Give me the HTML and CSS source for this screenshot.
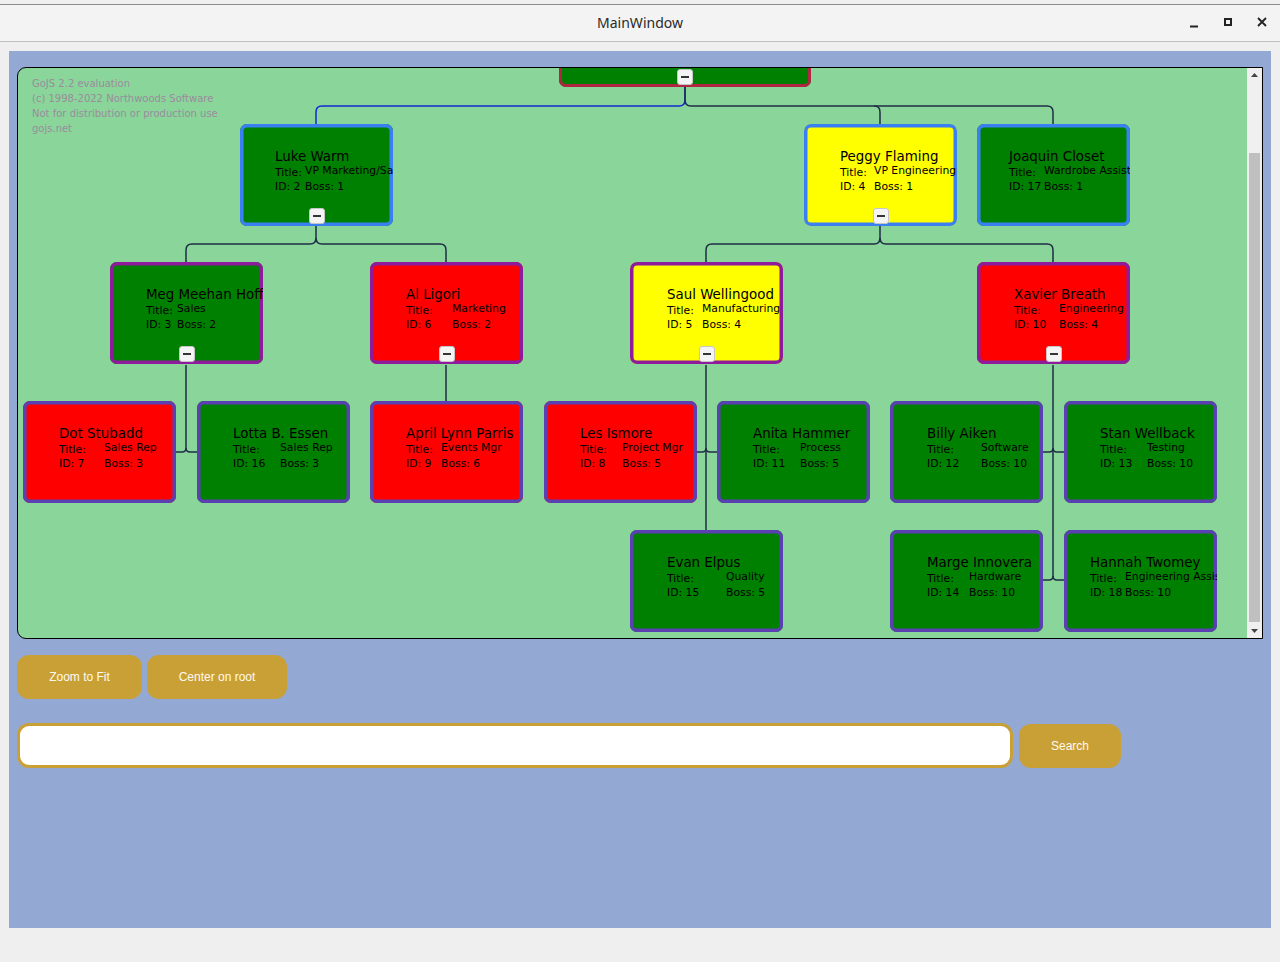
FILE: index.html
```html
<!DOCTYPE html>
<html>
<head>
<meta charset="utf-8">
<title>MainWindow</title>
<link rel="stylesheet" href="styles.css">
</head>
<body>
<div class="titlebar">
  <span class="title">MainWindow</span>
  <div class="controls">
    <svg class="ctl" width="14" height="14" viewBox="0 0 14 14"><path d="M3 11.5 H11" stroke="#222" stroke-width="2"/></svg>
    <svg class="ctl" width="14" height="14" viewBox="0 0 14 14"><rect x="4" y="4" width="6" height="6" fill="none" stroke="#222" stroke-width="2"/></svg>
    <svg class="ctl" width="14" height="14" viewBox="0 0 14 14"><path d="M3 3 L11 11 M11 3 L3 11" stroke="#222" stroke-width="1.8"/></svg>
  </div>
</div>

<div class="panel">
  <div class="canvas">
    <div class="diagram">
      <svg class="links" width="1229" height="570" viewBox="18 68 1229 570">
        <path class="lk blue" d="M685 87 V100 Q685 106 679 106 H322 Q316 106 316 112 V124"/>
        <path class="lk" d="M685 87 V100 Q685 106 691 106 H874 Q880 106 880 112 V124"/>
        <path class="lk" d="M874 106 H1047 Q1053 106 1053 112 V124"/>
        <path class="lk" d="M316 226 V238 Q316 244 310 244 H192 Q186 244 186 250 V262"/>
        <path class="lk" d="M316 238 Q316 244 322 244 H440 Q446 244 446 250 V262"/>
        <path class="lk" d="M880 226 V238 Q880 244 874 244 H712 Q706 244 706 250 V262"/>
        <path class="lk" d="M880 238 Q880 244 886 244 H1047 Q1053 244 1053 250 V262"/>
        <path class="lk" d="M186 365 V448 Q186 452 182 452 H176"/>
        <path class="lk" d="M186 448 Q186 452 190 452 H197"/>
        <path class="lk" d="M446 365 V401"/>
        <path class="lk" d="M706 365 V530"/>
        <path class="lk" d="M696 452 H702 Q706 452 706 448"/>
        <path class="lk" d="M717 452 H710 Q706 452 706 448"/>
        <path class="lk" d="M1053 365 V576 Q1053 580 1049 580 H1043"/>
        <path class="lk" d="M1053 576 Q1053 580 1057 580 H1064"/>
        <path class="lk" d="M1043 452 H1049 Q1053 452 1053 448"/>
        <path class="lk" d="M1064 452 H1057 Q1053 452 1053 448"/>
      </svg>

      <div class="watermark">
        <div>GoJS 2.2 evaluation</div>
        <div>(c) 1998-2022 Northwoods Software</div>
        <div>Not for distribution or production use</div>
        <div>gojs.net</div>
      </div>

      <div class="node root green b-root" style="left:541px;top:-40px;width:252px;height:59px">
        <span class="exp"><i></i></span>
      </div>

      <div class="node green b-l1" style="left:222px;top:56px;--pl:35px;--c2:30px">
        <div class="name">Luke Warm</div>
        <div class="details"><span>Title:</span><span class="val">VP Marketing/Sales</span><span>ID: 2</span><span>Boss: 1</span></div>
        <span class="exp"><i></i></span>
      </div>
      <div class="node yellow b-l1" style="left:786px;top:56px;--pl:36px;--c2:34px">
        <div class="name">Peggy Flaming</div>
        <div class="details"><span>Title:</span><span class="val">VP Engineering</span><span>ID: 4</span><span>Boss: 1</span></div>
        <span class="exp"><i></i></span>
      </div>
      <div class="node green b-l1" style="left:959px;top:56px;--pl:32px;--c2:35px">
        <div class="name">Joaquin Closet</div>
        <div class="details"><span>Title:</span><span class="val">Wardrobe Assistant</span><span>ID: 17</span><span>Boss: 1</span></div>
      </div>

      <div class="node green b-l2" style="left:92px;top:194px;--pl:36px;--c2:31px">
        <div class="name">Meg Meehan Hoffa</div>
        <div class="details"><span>Title:</span><span class="val">Sales</span><span>ID: 3</span><span>Boss: 2</span></div>
        <span class="exp"><i></i></span>
      </div>
      <div class="node red b-l2" style="left:352px;top:194px;--pl:36px;--c2:46px">
        <div class="name">Al Ligori</div>
        <div class="details"><span>Title:</span><span class="val">Marketing</span><span>ID: 6</span><span>Boss: 2</span></div>
        <span class="exp"><i></i></span>
      </div>
      <div class="node yellow b-l2" style="left:612px;top:194px;--pl:37px;--c2:35px">
        <div class="name">Saul Wellingood</div>
        <div class="details"><span>Title:</span><span class="val">Manufacturing</span><span>ID: 5</span><span>Boss: 4</span></div>
        <span class="exp"><i></i></span>
      </div>
      <div class="node red b-l2" style="left:959px;top:194px;--pl:37px;--c2:45px">
        <div class="name">Xavier Breath</div>
        <div class="details"><span>Title:</span><span class="val">Engineering</span><span>ID: 10</span><span>Boss: 4</span></div>
        <span class="exp"><i></i></span>
      </div>

      <div class="node red b-l3" style="left:5px;top:333px;--pl:36px;--c2:45px">
        <div class="name">Dot Stubadd</div>
        <div class="details"><span>Title:</span><span class="val">Sales Rep</span><span>ID: 7</span><span>Boss: 3</span></div>
      </div>
      <div class="node green b-l3" style="left:179px;top:333px;--pl:36px;--c2:47px">
        <div class="name">Lotta B. Essen</div>
        <div class="details"><span>Title:</span><span class="val">Sales Rep</span><span>ID: 16</span><span>Boss: 3</span></div>
      </div>
      <div class="node red b-l3" style="left:352px;top:333px;--pl:36px;--c2:35px">
        <div class="name">April Lynn Parris</div>
        <div class="details"><span>Title:</span><span class="val">Events Mgr</span><span>ID: 9</span><span>Boss: 6</span></div>
      </div>
      <div class="node red b-l3" style="left:526px;top:333px;--pl:36px;--c2:42px">
        <div class="name">Les Ismore</div>
        <div class="details"><span>Title:</span><span class="val">Project Mgr</span><span>ID: 8</span><span>Boss: 5</span></div>
      </div>
      <div class="node green b-l3" style="left:699px;top:333px;--pl:36px;--c2:47px">
        <div class="name">Anita Hammer</div>
        <div class="details"><span>Title:</span><span class="val">Process</span><span>ID: 11</span><span>Boss: 5</span></div>
      </div>
      <div class="node green b-l3" style="left:872px;top:333px;--pl:37px;--c2:54px">
        <div class="name">Billy Aiken</div>
        <div class="details"><span>Title:</span><span class="val">Software</span><span>ID: 12</span><span>Boss: 10</span></div>
      </div>
      <div class="node green b-l3" style="left:1046px;top:333px;--pl:36px;--c2:47px">
        <div class="name">Stan Wellback</div>
        <div class="details"><span>Title:</span><span class="val">Testing</span><span>ID: 13</span><span>Boss: 10</span></div>
      </div>

      <div class="node green b-l3" style="left:612px;top:462px;--pl:37px;--c2:59px">
        <div class="name">Evan Elpus</div>
        <div class="details"><span>Title:</span><span class="val">Quality</span><span>ID: 15</span><span>Boss: 5</span></div>
      </div>
      <div class="node green b-l3" style="left:872px;top:462px;--pl:37px;--c2:42px">
        <div class="name">Marge Innovera</div>
        <div class="details"><span>Title:</span><span class="val">Hardware</span><span>ID: 14</span><span>Boss: 10</span></div>
      </div>
      <div class="node green b-l3" style="left:1046px;top:462px;--pl:26px;--c2:35px">
        <div class="name">Hannah Twomey</div>
        <div class="details"><span>Title:</span><span class="val">Engineering Assistant</span><span>ID: 18</span><span>Boss: 10</span></div>
      </div>
    </div>

    <div class="scrollbar">
      <div class="arrow"><svg width="15" height="15" viewBox="0 0 15 15"><path d="M4 9 L7.5 5 L11 9 Z" fill="#444"/></svg></div>
      <div class="track"><div class="thumb"></div></div>
      <div class="arrow"><svg width="15" height="15" viewBox="0 0 15 15"><path d="M4 6 L7.5 10 L11 6 Z" fill="#444"/></svg></div>
    </div>
  </div>

  <div class="btnrow">
    <button class="btn zoom">Zoom to Fit</button>
    <button class="btn center">Center on root</button>
  </div>

  <div class="searchrow">
    <input class="search" type="text">
    <button class="btn searchbtn">Search</button>
  </div>
</div>
</body>
</html>
```

FILE: styles.css
```css
html, body {
  margin: 0;
  padding: 0;
}
body {
  background: #efefef;
  width: 1280px;
  height: 962px;
  overflow: hidden;
  font-family: "DejaVu Sans", sans-serif;
}

.titlebar {
  margin-top: 4px;
  height: 36px;
  box-sizing: content-box;
  border-top: 1px solid #8c8c8c;
  border-bottom: 1px solid #bebebe;
  background: #f3f3f3;
  display: flex;
  align-items: center;
  justify-content: center;
  position: relative;
}
.title {
  font-family: "Noto Sans", "DejaVu Sans", sans-serif;
  font-size: 14px;
  color: #2a2a2a;
  margin-bottom: 2px;
}
.controls {
  position: absolute;
  right: 11px;
  top: 10px;
  display: flex;
  gap: 20px;
}
.ctl {
  display: block;
}

.panel {
  margin: 9px 9px 0 9px;
  height: 877px;
  box-sizing: border-box;
  background: #93a8d2;
  padding: 16px 8px 0 8px;
}

.canvas {
  height: 572px;
  box-sizing: border-box;
  border: 1px solid #000;
  border-radius: 9px 0 0 9px;
  background: #89d59a;
  display: flex;
  overflow: hidden;
}
.diagram {
  flex: 1;
  position: relative;
  overflow: hidden;
}
.links {
  position: absolute;
  left: 0;
  top: 0;
}
.lk {
  fill: none;
  stroke: #1f2c46;
  stroke-width: 1.5;
}
.lk.blue {
  stroke: #1228d2;
}

.watermark {
  position: absolute;
  left: 14px;
  top: 8px;
  font-size: 10px;
  line-height: 15px;
  color: #9c8c9c;
  white-space: nowrap;
}

.node {
  position: absolute;
  width: 153px;
  height: 102px;
  box-sizing: border-box;
  border-radius: 7px;
  overflow: hidden;
  padding-top: 25px;
  padding-left: var(--pl, 36px);
  color: #000;
  white-space: nowrap;
}
.green { background: #008000; }
.red { background: #ff0000; }
.yellow { background: #ffff00; }
.b-root { box-shadow: inset 0 0 0 3px #b02540; }
.b-l1 { box-shadow: inset 0 0 0 3.5px #3b80f2; }
.b-l2 { box-shadow: inset 0 0 0 3.5px #8e1b9c; }
.b-l3 { box-shadow: inset 0 0 0 3.5px #5a40b2; }

.name {
  font-size: 13.4px;
  line-height: 16px;
}
.details {
  display: grid;
  grid-template-columns: var(--c2, 32px) auto;
  font-size: 10.8px;
  line-height: 14px;
  margin-top: 1px;
}
.details .val {
  margin-top: -2px;
}

.exp {
  position: absolute;
  left: 50%;
  bottom: 2px;
  margin-left: -8px;
  width: 16px;
  height: 16px;
  box-sizing: border-box;
  background: #f4f4f4;
  border: 1px solid #c6c6c6;
  border-radius: 3px;
  display: flex;
  align-items: center;
  justify-content: center;
}
.exp i {
  display: block;
  width: 8px;
  height: 2px;
  background: #353535;
}

.scrollbar {
  width: 15px;
  background: #f0f0f0;
  display: flex;
  flex-direction: column;
}
.arrow {
  height: 15px;
}
.arrow svg {
  display: block;
}
.track {
  flex: 1;
  padding-top: 70px;
  display: flex;
  justify-content: center;
}
.thumb {
  width: 11px;
  height: 469px;
  background: #c0c0c0;
}

.btnrow {
  margin-top: 16px;
  display: flex;
  gap: 5px;
}
.btn {
  border: none;
  background: #c9a035;
  color: #fffaf0;
  font-family: "Liberation Sans", Arial, sans-serif;
  font-size: 12px;
  border-radius: 12px;
  height: 44px;
  padding: 0;
}
.zoom { width: 125px; }
.center { width: 140px; }

.searchrow {
  margin-top: 24px;
  display: flex;
  align-items: flex-start;
}
.search {
  width: 996px;
  height: 45px;
  box-sizing: border-box;
  border: 3px solid #c9a035;
  border-radius: 12px;
  background: #fff;
  margin: 0;
  outline: none;
}
.searchbtn {
  width: 102px;
  margin-left: 6px;
  margin-top: 1px;
}
```
